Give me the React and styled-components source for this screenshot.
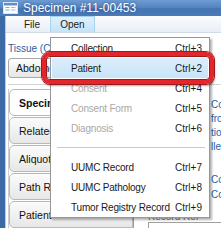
import React from "react";
import styled, { createGlobalStyle } from "styled-components";

const Global = createGlobalStyle`
  html, body { margin: 0; padding: 0; background: #fff; }
  body { font-family: "Liberation Sans", Arial, sans-serif; }
  #root { width: 221px; height: 228px; overflow: hidden; position: relative; }
`;

const Win = styled.div`
  width: 221px;
  height: 228px;
  display: flex;
  flex-direction: column;
  position: relative;
  background: #4272ad;
`;

const TitleBar = styled.div`
  height: 17px;
  display: flex;
  align-items: center;
  gap: 5px;
  padding-left: 3px;
  background: linear-gradient(#6e9bd2 0%, #5686c2 45%, #4474b2 55%, #4a7bb8 100%);
  color: #fff;
  font-size: 12px;
  text-shadow: 0 0 3px rgba(20, 40, 90, 0.6);
`;

const Frame = styled.div`
  flex: 1;
  display: flex;
  padding-left: 5px;
  background: #3c6aa5;
`;

const Client = styled.div`
  flex: 1;
  display: flex;
  flex-direction: column;
  background: #fff;
  border-left: 1px solid #b9cbe2;
`;

const MenuBar = styled.div`
  height: 16px;
  display: flex;
  align-items: stretch;
  padding-left: 8px;
  background: linear-gradient(#fbfcfe, #e9eef6);
  border-bottom: 1px solid #d2dbe8;
  font-size: 10px;
`;

const MenuTitle = styled.div`
  display: flex;
  align-items: center;
  padding: 0 ${(p) => p.$pad}px;
  color: #1b1b1b;
  background: ${(p) => (p.$open ? "linear-gradient(#dff0fc, #c4e3f8)" : "transparent")};
  border: 1px solid ${(p) => (p.$open ? "#a6d1ef" : "transparent")};
  border-bottom: none;
`;

const Body = styled.div`
  flex: 1;
  display: flex;
  flex-direction: column;
  padding: 10px 0 0 2px;
`;

const Label = styled.div`
  font-size: 10px;
  color: #1f5ea8;
  height: 13px;
  display: flex;
  justify-content: space-between;
`;

const Dark = styled.span`
  color: #333;
  padding-right: 2px;
`;

const Combo = styled.div`
  margin-top: 2px;
  width: 120px;
  height: 18px;
  border: 1px solid #a9a9a9;
  border-radius: 3px;
  background: linear-gradient(#fdfdfd, #e6e6e6);
  font-size: 10.5px;
  display: flex;
  align-items: center;
  padding-left: 7px;
  color: #111;
`;

const Rule = styled.div`
  height: 1px;
  background: #d4d4d4;
  margin: 6px 0 4px 0;
`;

const Split = styled.div`
  flex: 1;
  display: flex;
`;

const Tabs = styled.div`
  width: 124px;
  display: flex;
  flex-direction: column;
  border-left: 1px solid #cfcfcf;
`;

const Tab = styled.div`
  height: 25px;
  border: 1px solid #b8b8b8;
  border-radius: 5px 0 0 5px;
  background: ${(p) => (p.$active ? "#fff" : "linear-gradient(#fbfbfb, #e7e7e7)")};
  font-size: 10.5px;
  font-weight: ${(p) => (p.$active ? "bold" : "normal")};
  display: flex;
  align-items: center;
  padding-left: 9px;
  color: #111;
  & + & { margin-top: 1px; }
`;

const Detail = styled.div`
  flex: 1;
  border-left: 1px solid #9c9c9c;
  display: flex;
  flex-direction: column;
  padding-left: 77px;
  font-size: 10px;
  color: #1f5ea8;
  white-space: nowrap;
  overflow: hidden;
`;

const Line = styled.div`
  height: ${(p) => p.$h || 14}px;
  line-height: ${(p) => p.$h || 14}px;
`;

const Gray = styled.div`
  margin-top: auto;
  margin-left: -63px;
  font-size: 10px;
  color: #777;
  line-height: 10px;
`;

const Field = styled.div`
  margin-left: -63px;
  height: 5px;
  border: 1px solid #a0a0a0;
  border-right: none;
  border-bottom: none;
`;

const Menu = styled.div`
  position: absolute;
  left: 50px;
  top: 37px;
  width: 158px;
  background: #fff;
  border: 1px solid #979797;
  box-shadow: 2px 2px 2px rgba(0, 0, 0, 0.3);
  font-size: 10px;
  letter-spacing: -0.2px;
  display: flex;
  flex-direction: column;
`;

const Item = styled.div`
  height: 20px;
  display: flex;
  align-items: center;
  margin: 0 1px;
  padding-left: 19px;
  color: ${(p) => (p.$disabled ? "#a8a8a8" : "#1a1a1a")};
  background: ${(p) => (p.$hot ? "linear-gradient(#dcedfb, #c8e4f8)" : "transparent")};
`;

const ItemLabel = styled.span`
  width: 104px;
  white-space: nowrap;
`;

const Key = styled.span`
  color: #1a1a1a;
  letter-spacing: 0;
`;

const Sep = styled.div`
  height: 19px;
  display: flex;
  align-items: center;
  padding: 0 4px 0 6px;
  &::after {
    content: "";
    flex: 1;
    height: 1px;
    background: #c8c8c8;
  }
`;

const Callout = styled.div`
  position: absolute;
  left: 42px;
  top: 52px;
  width: 164px;
  height: 24px;
  border: 4px solid #e3262b;
  border-radius: 8px;
  box-shadow: 0 0 0 1px #9e1a1a, inset 0 0 0 1px #9e1a1a, 1px 2px 2px rgba(0, 0, 0, 0.35);
`;

function WinIcon() {
  return (
    <svg width="15" height="12" viewBox="0 0 15 12">
      <rect x="0.5" y="0.5" width="14" height="11" fill="#fff" stroke="#d8e4f2" />
      <rect x="1" y="1" width="13" height="2.5" fill="#5d8fcf" />
      <rect x="2.5" y="5" width="4" height="1" fill="#7aa3d6" />
      <rect x="2.5" y="7.5" width="4" height="1" fill="#7aa3d6" />
      <rect x="8" y="5" width="4.5" height="1" fill="#9db9de" />
      <rect x="8" y="7.5" width="4.5" height="1" fill="#9db9de" />
    </svg>
  );
}

const items = [
  { label: "Collection", key: "Ctrl+3" },
  { label: "Patient", key: "Ctrl+2", hot: true },
  { label: "Consent", key: "Ctrl+4", disabled: true },
  { label: "Consent Form", key: "Ctrl+5", disabled: true },
  { label: "Diagnosis", key: "Ctrl+6", disabled: true },
  { sep: true },
  { label: "UUMC Record", key: "Ctrl+7" },
  { label: "UUMC Pathology", key: "Ctrl+8" },
  { label: "Tumor Registry Record", key: "Ctrl+9" },
];

export default function App() {
  return (
    <>
      <Global />
      <Win>
        <TitleBar>
          <WinIcon />
          <span>Specimen #11-00453</span>
        </TitleBar>
        <Frame>
          <Client>
            <MenuBar>
              <MenuTitle $pad={9}>File</MenuTitle>
              <MenuTitle $pad={9} $open>Open</MenuTitle>
            </MenuBar>
            <Body>
              <Label>
                <span>Tissue (Collection Site)</span>
                <Dark>(H</Dark>
              </Label>
              <Combo>Abdomen</Combo>
              <Rule />
              <Split>
                <Tabs>
                  <Tab $active>Specimen</Tab>
                  <Tab>Related Specimens</Tab>
                  <Tab>Aliquots</Tab>
                  <Tab>Path Reports</Tab>
                  <Tab>Patient</Tab>
                </Tabs>
                <Detail>
                  <Line $h={9} />
                  <Line>Consent</Line>
                  <Line>from</Line>
                  <Line>tion</Line>
                  <Line>llection</Line>
                  <Line $h={18} />
                  <Line $h={15}>Comment</Line>
                  <Line $h={15}>Comment</Line>
                  <Gray>Record Ref</Gray>
                  <Field />
                </Detail>
              </Split>
            </Body>
          </Client>
        </Frame>
        <Menu>
          {items.map((it, i) =>
            it.sep ? (
              <Sep key={i} />
            ) : (
              <Item key={i} $hot={it.hot} $disabled={it.disabled}>
                <ItemLabel>{it.label}</ItemLabel>
                <Key>{it.key}</Key>
              </Item>
            )
          )}
        </Menu>
        <Callout />
      </Win>
    </>
  );
}
